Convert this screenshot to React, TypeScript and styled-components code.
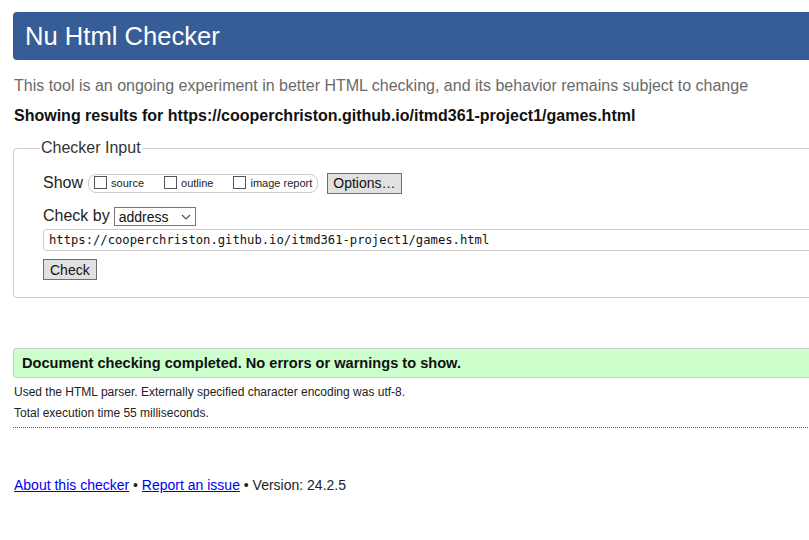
import styled, { createGlobalStyle } from "styled-components";

const GlobalStyle = createGlobalStyle`
  html, body {
    margin: 0;
    padding: 0;
    overflow: hidden;
    background: #fff;
  }
  body {
    font-family: "Liberation Sans", Arial, sans-serif;
    color: #000;
  }
  * {
    box-sizing: border-box;
  }
`;

const Page = styled.div`
  width: 1000px;
  padding: 12px 0 0 13px;
`;

const Header = styled.h1`
  margin: 0;
  height: 48px;
  display: flex;
  align-items: center;
  padding-left: 12px;
  background: #365d95;
  color: #fff;
  font-size: 25.6px;
  font-weight: normal;
  border-radius: 4px;
`;

const Intro = styled.p`
  margin: 16px 0 0 1px;
  font-size: 16px;
  line-height: 20px;
  color: #6a6a6a;
`;

const Results = styled.p`
  margin: 10px 0 0 1px;
  font-size: 16px;
  line-height: 20px;
  font-weight: bold;
  color: #111;
`;

const Fieldset = styled.fieldset`
  margin: 13px 0 0 0;
  padding: 15px 29px 17px 29px;
  border: 1px solid #ccc;
  border-radius: 4px;
`;

const Legend = styled.legend`
  padding: 0 1px;
  margin-left: -3px;
  font-size: 16px;
  color: #333;
`;

const Row = styled.div<{ $gap: number; $mb: number }>`
  display: flex;
  align-items: center;
  gap: ${(p) => p.$gap}px;
  height: 22px;
  margin-bottom: ${(p) => p.$mb}px;
  white-space: nowrap;
`;

const Label = styled.span`
  font-size: 16px;
  color: #222;
`;

const ShowGroup = styled.div`
  display: flex;
  align-items: flex-end;
  gap: 20px;
  height: 19px;
  padding: 0 5px 3px 5px;
  border: 1px solid #ccc;
  border-radius: 8px;
`;

const Option = styled.label`
  display: flex;
  align-items: flex-end;
  gap: 4px;
  font-size: 11px;
  line-height: 12px;
  color: #222;
  white-space: nowrap;
`;

const Box = styled.span`
  display: inline-block;
  flex: none;
  width: 13px;
  height: 13px;
  border: 1px solid #555;
  background: #fff;
`;

const Button = styled.button<{ $px: number; $ml?: number }>`
  font-family: "Liberation Sans", Arial, sans-serif;
  font-size: 14px;
  color: #111;
  height: 21px;
  padding: 0 ${(p) => p.$px}px;
  background: #e1e1e1;
  border: 1px solid #6f6f6f;
  border-radius: 0;
  white-space: nowrap;
  margin-left: ${(p) => p.$ml ?? 0}px;
`;

const Select = styled.div`
  display: flex;
  align-items: center;
  justify-content: space-between;
  width: 82px;
  height: 19px;
  padding: 0 2px 0 4px;
  margin-top: 1px;
  border: 1px solid #767676;
  font-size: 14px;
  color: #111;
`;

const UrlInput = styled.div`
  height: 22px;
  display: flex;
  align-items: center;
  padding-left: 5px;
  border: 1px solid #ccc;
  border-right: none;
  border-radius: 4px 0 0 4px;
  font-family: "DejaVu Sans Mono", "Liberation Mono", monospace;
  font-size: 12.2px;
  color: #111;
  margin: 2px 0 8px 0;
`;

const Success = styled.div`
  margin-top: 50px;
  height: 30px;
  display: flex;
  align-items: center;
  padding-left: 8px;
  background: #ccffcc;
  border: 1px solid #ccc;
  border-radius: 3px 0 0 3px;
  font-size: 14.6px;
  font-weight: bold;
  color: #111;
`;

const Detail = styled.p`
  margin: 0 0 0 1px;
  font-size: 12px;
  line-height: 21px;
  color: #222;
`;

const Details = styled.div`
  margin-top: 4px;
  padding-bottom: 3px;
  border-bottom: 1px dotted #555;
`;

const Footer = styled.p`
  margin: 49px 0 0 1px;
  font-size: 14px;
  color: #222;
  a {
    color: #0000ee;
  }
`;

export default function App() {
  return (
    <Page>
      <GlobalStyle />
      <Header>Nu Html Checker</Header>
      <Intro>
        This tool is an ongoing experiment in better HTML checking, and its behavior remains subject to change
      </Intro>
      <Results>Showing results for https://cooperchriston.github.io/itmd361-project1/games.html</Results>
      <Fieldset>
        <Legend>Checker Input</Legend>
        <Row $gap={5} $mb={11}>
          <Label>Show</Label>
          <ShowGroup>
            <Option><Box />source</Option>
            <Option><Box />outline</Option>
            <Option><Box />image report</Option>
          </ShowGroup>
          <Button $px={5} $ml={4}>Options…</Button>
        </Row>
        <Row $gap={4} $mb={0}>
          <Label>Check by</Label>
          <Select>
            address
            <svg width="14" height="10" viewBox="0 0 14 10">
              <path d="M3 3 L7 7 L11 3" fill="none" stroke="#555" strokeWidth="1.2" />
            </svg>
          </Select>
        </Row>
        <UrlInput>https://cooperchriston.github.io/itmd361-project1/games.html</UrlInput>
        <Button $px={6}>Check</Button>
      </Fieldset>
      <Success>Document checking completed. No errors or warnings to show.</Success>
      <Details>
        <Detail>Used the HTML parser. Externally specified character encoding was utf-8.</Detail>
        <Detail>Total execution time 55 milliseconds.</Detail>
      </Details>
      <Footer>
        <a href="#about">About this checker</a> • <a href="#report">Report an issue</a> • Version: 24.2.5
      </Footer>
    </Page>
  );
}
